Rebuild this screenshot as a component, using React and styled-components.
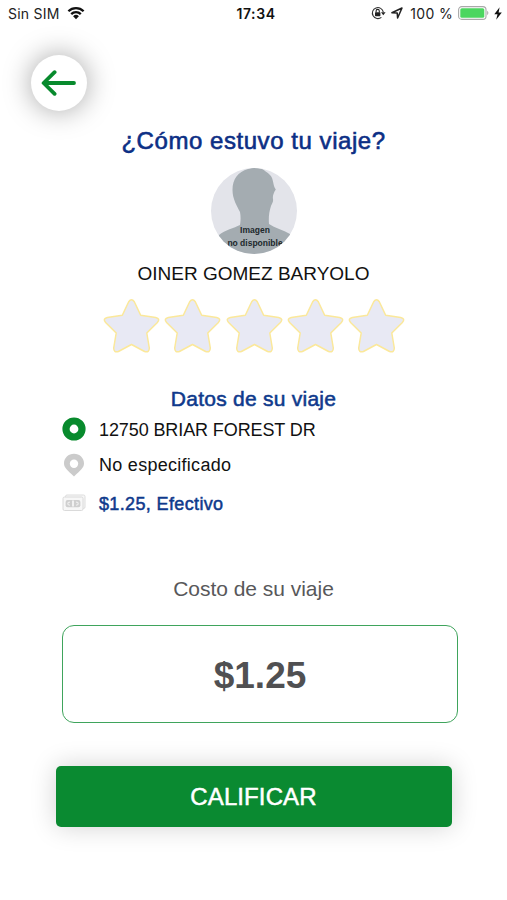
import styled, { createGlobalStyle } from "styled-components";

const GlobalStyle = createGlobalStyle`
    * {
        box-sizing: border-box;
    }

    body {
        margin: 0;
        background: #ffffff;
        font-family: "Liberation Sans", Arial, sans-serif;
        overflow: hidden;
    }
`

const WifiIcon = () => (
    <svg width="18" height="14" viewBox="0 0 18 14">
        <g fill="none" stroke="#111" strokeWidth="2.3">
            <path d="M1.4 5.2 A10.8 10.8 0 0 1 16.6 5.2" />
            <path d="M4.2 8.1 A6.8 6.8 0 0 1 13.8 8.1" />
        </g>
        <path d="M9 13.2 L6.1 10.2 A4.2 4.2 0 0 1 11.9 10.2 Z" fill="#111" />
    </svg>
)

const LockIcon = () => (
    <svg width="15" height="14" viewBox="0 0 15 14">
        <path d="M10.4 11.3 A5.5 5.5 0 1 1 12.3 6.2" fill="none" stroke="#333" strokeWidth="1.1" />
        <path d="M10 6.2 H14.6 L12.3 9.2 Z" fill="#222" />
        <rect x="4" y="6.2" width="5.4" height="4" rx=".6" fill="#222" />
        <path d="M5.1 6.4 V5 A1.6 1.6 0 0 1 8.3 5 V6.4" fill="none" stroke="#222" strokeWidth="1.1" />
    </svg>
)

const LocationIcon = () => (
    <svg width="12" height="12" viewBox="0 0 12 12">
        <path d="M.9 5.7 L11 1 L6.6 11 L6.2 5.9 Z" fill="none" stroke="#222" strokeWidth="1.5" strokeLinejoin="round" />
    </svg>
)

const BatteryIcon = () => (
    <svg width="31" height="14" viewBox="0 0 31 14">
        <rect x=".6" y=".6" width="27.4" height="12.8" rx="3.2" fill="#fff" stroke="#a9a9a9" strokeWidth="1.1" />
        <rect x="2.3" y="2.2" width="24" height="9.6" rx="1.6" fill="#4cd660" />
        <path d="M29.2 4.8 Q31.6 7 29.2 9.2 Z" fill="#a9a9a9" />
    </svg>
)

const BoltIcon = () => (
    <svg width="8" height="13" viewBox="0 0 8 13">
        <path d="M5.6 .3 L.3 7.2 H3.5 L2.2 12.7 L7.8 5.5 H4.6 Z" fill="#111" />
    </svg>
)

const ArrowIcon = () => (
    <svg width="36" height="26" viewBox="0 0 36 26">
        <path d="M33 13 H3 M13.6 2.2 L2.6 13 L13.6 23.8" fill="none" stroke="#088a2d" strokeWidth="3.8" strokeLinecap="round" strokeLinejoin="round" />
    </svg>
)

const Silhouette = () => (
    <svg width="86" height="86" viewBox="0 0 86 86">
        <rect width="86" height="86" fill="#e3e4ea" />
        <path d="M37 1 C27 4 21.5 11 21.5 22 C21.5 31 26 38 29 44 C30 49 29.5 54 29 57 C23 60 14 62 8 67 L8 86 H79 V66 C72 62 64 60 58 56 C57.5 50 58 44 60 38 C61 35 62.5 34 62 31 C61.5 28 62.5 25 64.8 21.5 C61.5 17 63 11 59 7 C56 4 54 3 51 1 Q44 -1.5 37 1 Z" fill="#a4acb1" />
    </svg>
)

const Star = () => (
    <svg width="57" height="56" viewBox="0 0 57 56">
        <path
            d="M25.7 3.7 Q28.5 -.2 31.3 3.7 L37.7 17.3 L52.7 19.4 Q57.7 20.7 54.4 24.5 L43.8 35 L46.3 50 Q46.3 55 41.6 53.5 L28.5 46.5 L15.4 53.5 Q10.7 55 10.7 50 L13.2 35 L2.6 24.5 Q-.7 20.7 4.3 19.4 L19.3 17.3 Z"
            fill="#e8e9f4"
            stroke="#fbe89a"
            strokeWidth="1.5"
            strokeLinejoin="round"
        />
    </svg>
)

const OriginIcon = () => (
    <svg width="24" height="24" viewBox="0 0 24 24">
        <circle cx="12" cy="12" r="8" fill="#fff" stroke="#088a2d" strokeWidth="7.2" />
    </svg>
)

const PinIcon = () => (
    <svg width="24" height="24" viewBox="0 0 24 24">
        <path d="M12 .8 C6.3 .8 2 5 2 10.3 C2 15 5.5 17.2 12 23.6 C18.5 17.2 22 15 22 10.3 C22 5 17.7 .8 12 .8 Z" fill="#cbcbcb" />
        <circle cx="12" cy="10.8" r="4.2" fill="#fff" />
    </svg>
)

const CashIcon = () => (
    <svg width="24" height="18" viewBox="0 0 24 18">
        <rect x="3.5" y="1" width="19.5" height="13.5" rx="1.5" fill="#f7f7f7" stroke="#dddddd" />
        <rect x="1" y="3" width="20" height="13.5" rx="1.5" fill="#f7f7f7" stroke="#dadada" />
        <rect x="3.6" y="5.9" width="14.8" height="7.4" rx="2" fill="#cfcfcf" />
        <path d="M11 6.6 V12.6" stroke="#f1f1f1" strokeWidth="2" />
        <path d="M8 8.1 Q5.8 8.1 5.8 9.6 Q5.8 11.2 8 11.2 M14 8.1 Q16.2 8.1 16.2 9.6 Q16.2 11.2 14 11.2" fill="none" stroke="#ededed" strokeWidth="1.1" />
    </svg>
)

const trip = [
    { icon: <OriginIcon />, text: "12750 BRIAR FOREST DR", height: 34, spacing: -0.1 },
    { icon: <PinIcon />, text: "No especificado", height: 38, spacing: 0.28 },
    { icon: <CashIcon />, text: "$1.25, Efectivo", height: 38, spacing: 0.36, highlight: true },
]

const App = () => {
    return(
        <Screen>
            <GlobalStyle />
            <StatusBar>
                <Carrier>
                    <span>Sin SIM</span>
                    <WifiIcon />
                </Carrier>
                <Clock>17:34</Clock>
                <Indicators>
                    <LockIcon />
                    <LocationIcon />
                    <Percent>100 %</Percent>
                    <BatteryIcon />
                    <BoltIcon />
                </Indicators>
            </StatusBar>
            <BackButton aria-label="Atrás"><ArrowIcon /></BackButton>
            <Title>¿Cómo estuvo tu viaje?</Title>
            <Avatar>
                <Silhouette />
                <AvatarLabel>Imagen<br />no disponible</AvatarLabel>
            </Avatar>
            <DriverName>OINER GOMEZ BARYOLO</DriverName>
            <Stars>
                {[1, 2, 3, 4, 5].map((n) => <Star key={n} />)}
            </Stars>
            <Subtitle>Datos de su viaje</Subtitle>
            <TripList>
                {trip.map((row) =>
                    <TripRow key={row.text} $height={row.height} $spacing={row.spacing} $highlight={row.highlight}>
                        {row.icon}
                        <TripText $low={row.text !== "No especificado"}>{row.text}</TripText>
                    </TripRow>)}
            </TripList>
            <CostLabel>Costo de su viaje</CostLabel>
            <CostBox>$1.25</CostBox>
            <RateButton>CALIFICAR</RateButton>
        </Screen>
    )
}

const Screen = styled.div`
    width: 507px;
    height: 900px;
    display: flex;
    flex-direction: column;
    align-items: center;
    background: #ffffff;
`

const StatusBar = styled.header`
    width: 100%;
    height: 26px;
    padding: 0 5px 0 8px;
    display: grid;
    grid-template-columns: 1fr auto 1fr;
    align-items: center;
    font-family: Inter, sans-serif;
    font-size: 14px;
    color: #222222;
`

const Carrier = styled.div`
    display: flex;
    align-items: center;
    gap: 7px;
    letter-spacing: 0.25px;
`

const Clock = styled.div`
    padding-left: 2px;
    font-weight: 600;
    letter-spacing: 0.6px;
    color: #111111;
`

const Indicators = styled.div`
    display: flex;
    align-items: center;
    justify-content: flex-end;
    gap: 5px;
`

const Percent = styled.span`
    margin-left: 2px;
    letter-spacing: 0.35px;
    white-space: nowrap;
`

const BackButton = styled.button`
    align-self: flex-start;
    display: flex;
    align-items: center;
    justify-content: center;
    width: 56px;
    height: 56px;
    margin: 29px 0 0 31px;
    padding: 0;
    border: none;
    border-radius: 50%;
    background: #ffffff;
    box-shadow: 0 0 28px rgba(0, 0, 0, 0.36);
`

const Title = styled.h1`
    margin: 14px 0 0;
    font-size: 24px;
    line-height: 32px;
    font-weight: 400;
    letter-spacing: 0.55px;
    color: #0c2f85;
    -webkit-text-stroke: 0.6px #0c2f85;
`

const Avatar = styled.div`
    position: relative;
    width: 86px;
    height: 86px;
    margin-top: 11px;
    border-radius: 50%;
    overflow: hidden;
`

const AvatarLabel = styled.div`
    position: absolute;
    top: 56px;
    left: 0;
    width: 89px;
    font-size: 8.5px;
    line-height: 12.5px;
    font-weight: 700;
    text-align: center;
    white-space: nowrap;
    color: #20282c;
`

const DriverName = styled.div`
    margin-top: 8px;
    font-size: 19px;
    line-height: 24px;
    color: #111111;
`

const Stars = styled.div`
    display: flex;
    gap: 4.2px;
    margin: 12px 0 0 1px;
`

const Subtitle = styled.h2`
    margin: 32px 0 0;
    font-size: 21px;
    line-height: 26px;
    font-weight: 400;
    letter-spacing: 0.25px;
    color: #0f3a8c;
    -webkit-text-stroke: 0.55px #0f3a8c;
`

const TripList = styled.div`
    align-self: stretch;
    padding-left: 62px;
`

const TripRow = styled.div`
    display: flex;
    align-items: center;
    gap: 13px;
    height: ${(props) => props.$height}px;
    font-size: 18px;
    letter-spacing: ${(props) => props.$spacing}px;
    color: ${(props) => props.$highlight ? "#0f3a8c" : "#111111"};
    -webkit-text-stroke: ${(props) => props.$highlight ? "0.5px #0f3a8c" : "0"};
`

const TripText = styled.span`
    padding-top: ${(props) => props.$low ? "2px" : "0"};
`

const CostLabel = styled.div`
    margin-top: 55px;
    font-size: 21px;
    line-height: 24px;
    letter-spacing: -0.03px;
    color: #58585a;
`

const CostBox = styled.div`
    display: flex;
    align-items: center;
    justify-content: center;
    width: 396px;
    height: 98px;
    padding-top: 3px;
    margin: 24px 0 0 13px;
    border: 1.5px solid #3fa45c;
    border-radius: 12px;
    font-size: 37px;
    font-weight: 700;
    color: #505052;
`

const RateButton = styled.button`
    width: 396px;
    height: 61px;
    margin-top: 43px;
    padding: 1px 0 0;
    border: none;
    border-radius: 5px;
    background: #0a8a31;
    box-shadow: 0 0 26px rgba(0, 0, 0, 0.18);
    font-family: inherit;
    font-size: 24px;
    letter-spacing: 0.1px;
    color: #ffffff;
    -webkit-text-stroke: 0.5px #ffffff;
`

export default App;
